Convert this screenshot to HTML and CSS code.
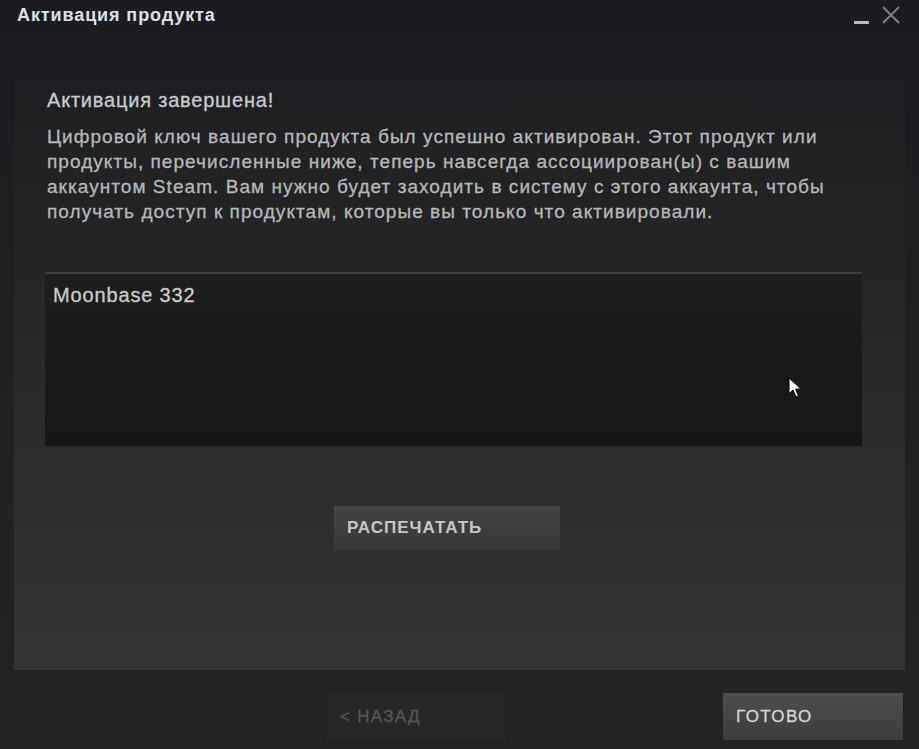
FILE: index.html
```html
<!DOCTYPE html>
<html lang="ru">
<head>
<meta charset="utf-8">
<title>Активация продукта</title>
<link rel="stylesheet" href="styles.css">
</head>
<body>
<div class="window">
  <header class="titlebar">
    <span class="title">Активация продукта</span>
    <div class="controls">
      <span class="ctl-min"></span>
      <svg class="ctl-close" width="20" height="20" viewBox="0 0 20 20">
        <path d="M2 2 L18 18 M18 2 L2 18" stroke="#7d7f82" stroke-width="2" fill="none"/>
      </svg>
    </div>
  </header>

  <main class="panel">
    <h2 class="heading">Активация завершена!</h2>
    <p class="message">Цифровой ключ вашего продукта был успешно активирован. Этот продукт или<br>продукты, перечисленные ниже, теперь навсегда ассоциирован(ы) с вашим<br>аккаунтом Steam. Вам нужно будет заходить в систему с этого аккаунта, чтобы<br>получать доступ к продуктам, которые вы только что активировали.</p>
    <div class="products">
      <div class="product">Moonbase 332</div>
    </div>
    <div class="print-row">
      <button class="btn btn-print">РАСПЕЧАТАТЬ</button>
    </div>
  </main>

  <footer class="footer">
    <button class="btn btn-back">&lt; НАЗАД</button>
    <button class="btn btn-done">ГОТОВО</button>
  </footer>

  <svg class="cursor" width="14" height="22" viewBox="0 0 14 22">
    <path d="M1 1 L1 17 L5 13 L8 20 L10.5 19 L7.5 12 L13 12 Z" fill="#ffffff" stroke="#000000" stroke-width="1"/>
  </svg>
</div>
</body>
</html>
```

FILE: styles.css
```css
* { box-sizing: border-box; }

html, body {
  margin: 0;
  padding: 0;
}

body {
  width: 919px;
  height: 749px;
  overflow: hidden;
  background: #232323;
  font-family: "Liberation Sans", Arial, sans-serif;
}

.window {
  position: relative;
  width: 919px;
  height: 749px;
  display: flex;
  flex-direction: column;
  background: linear-gradient(#1a1c1f 0px, #1d1e21 120px, #232323 670px);
}

/* Title bar */
.titlebar {
  height: 40px;
  display: flex;
  align-items: flex-start;
  justify-content: space-between;
  padding: 4px 18px 0 17px;
}

.title {
  color: #dfe1e3;
  font-size: 18px;
  font-weight: bold;
  line-height: 22px;
  letter-spacing: 0.9px;
}

.controls {
  display: flex;
  align-items: center;
  gap: 12px;
  padding-top: 1px;
}

.ctl-min {
  display: block;
  width: 15px;
  height: 3px;
  margin-top: 14px;
  background: #b9bbbd;
}

.ctl-close { display: block; }

/* Main panel */
.panel {
  height: 630px;
  margin: 0 14px;
  padding: 48px 43px 0 31px;
  background: linear-gradient(#1c1d20 0%, #222325 25%, #282828 50%, #2f2f2f 80%, #343434 100%);
}

.heading {
  margin: 0 0 12px 2px;
  font-size: 20px;
  font-weight: normal;
  line-height: 24px;
  color: #c9cbcd;
  letter-spacing: 0.8px;
  -webkit-text-stroke: 0.3px currentColor;
}

.message {
  margin: 0 0 48px 2px;
  font-size: 19px;
  line-height: 25px;
  color: #b6b8ba;
  letter-spacing: 1.05px;
  white-space: nowrap;
  -webkit-text-stroke: 0.3px currentColor;
}

.products {
  height: 174px;
  border-top: 2px solid #3d3d3d;
  background: linear-gradient(#1e1e1e, #171717);
  padding: 9px 8px;
}

.product {
  color: #c9cbcd;
  font-size: 20px;
  line-height: 24px;
  letter-spacing: 0.85px;
  -webkit-text-stroke: 0.3px currentColor;
}

.print-row {
  display: flex;
  padding: 60px 0 0 289px;
}

/* Buttons */
.btn {
  display: flex;
  align-items: center;
  border: none;
  margin: 0;
  font-family: "Liberation Sans", Arial, sans-serif;
  font-weight: bold;
  font-size: 17px;
  text-align: left;
  cursor: default;
}

.btn-print {
  width: 226px;
  height: 44px;
  padding: 0 13px;
  background: linear-gradient(#454545, #383838);
  color: #c5c7c9;
  letter-spacing: 1px;
}

.footer {
  height: 79px;
  display: flex;
  align-items: flex-start;
  padding: 23px 16px 0 327px;
}

.btn-back {
  width: 178px;
  height: 47px;
  padding: 0 13px;
  background: #272727;
  color: #555759;
  font-weight: normal;
  letter-spacing: 1.3px;
  -webkit-text-stroke: 0.3px currentColor;
}

.btn-done {
  width: 180px;
  height: 47px;
  margin-left: auto;
  padding: 0 13px;
  background: linear-gradient(#4e4e4e, #3c3c3c);
  color: #d6d8da;
  font-weight: normal;
  letter-spacing: 1.4px;
  -webkit-text-stroke: 0.3px currentColor;
}

/* Mouse pointer resting over the list */
.cursor {
  position: absolute;
  left: 788px;
  top: 377px;
}
```
